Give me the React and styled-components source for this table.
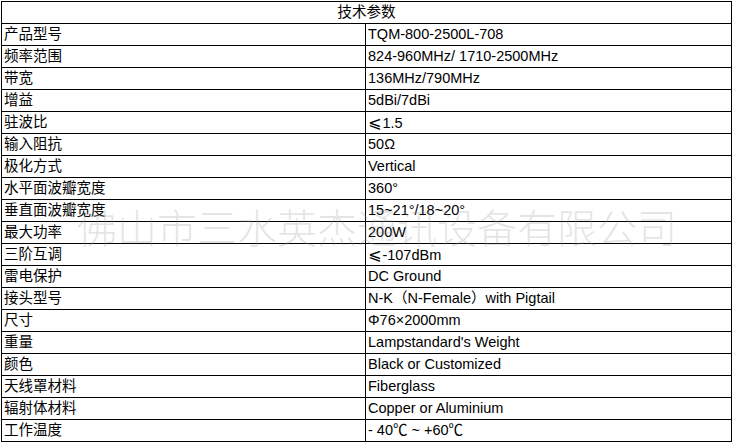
import React from "react";
import styled, { createGlobalStyle } from "styled-components";

const GlobalStyle = createGlobalStyle`
  html, body {
    margin: 0;
    padding: 0;
    background: #ffffff;
  }
  body {
    font-family: "Liberation Sans", "Noto Sans CJK SC", sans-serif;
    color: #000;
  }
`;

const Page = styled.div`
  position: relative;
  width: 732px;
  height: 442px;
  padding: 1px 0 0 1px;
  box-sizing: border-box;
  overflow: hidden;
`;

const Sheet = styled.div`
  display: grid;
  grid-template-columns: 364px 366px;
  border-top: 1px solid #000;
  border-left: 1px solid #000;
  width: max-content;
`;

const Cell = styled.div`
  box-sizing: border-box;
  height: 22px;
  line-height: 21px;
  padding-left: ${(p) => (p.$head ? 0 : 2)}px;
  border-right: 1px solid #000;
  border-bottom: 1px solid #000;
  font-size: 14.5px;
  white-space: nowrap;
  overflow: hidden;
  text-align: ${(p) => (p.$head ? "center" : "left")};
  grid-column: ${(p) => (p.$head ? "1 / span 2" : "auto")};
`;

const Sym = styled.span`
  font-family: "DejaVu Sans", sans-serif;
  font-size: 16px;
  margin-right: 1px;
`;

const Watermark = styled.div`
  position: absolute;
  left: 77px;
  top: 206px;
  font-family: "Noto Sans CJK SC", sans-serif;
  font-size: 40px;
  line-height: 40px;
  font-weight: 300;
  color: rgba(150, 150, 150, 0.25);
  white-space: nowrap;
  pointer-events: none;
`;

const rows = [
  ["产品型号", "TQM-800-2500L-708"],
  ["频率范围", "824-960MHz/ 1710-2500MHz"],
  ["带宽", "136MHz/790MHz"],
  ["增益", "5dBi/7dBi"],
  ["驻波比", <><Sym>⩽</Sym>1.5</>],
  ["输入阻抗", "50Ω"],
  ["极化方式", "Vertical"],
  ["水平面波瓣宽度", "360°"],
  ["垂直面波瓣宽度", "15~21°/18~20°"],
  ["最大功率", "200W"],
  ["三阶互调", <><Sym>⩽</Sym>-107dBm</>],
  ["雷电保护", "DC Ground"],
  ["接头型号", "N-K（N-Female）with Pigtail"],
  ["尺寸", "Φ76×2000mm"],
  ["重量", "Lampstandard's Weight"],
  ["颜色", "Black or Customized"],
  ["天线罩材料", "Fiberglass"],
  ["辐射体材料", "Copper or Aluminium"],
  ["工作温度", "- 40℃ ~ +60℃"],
];

export default function App() {
  return (
    <Page>
      <GlobalStyle />
      <Sheet>
        <Cell $head>技术参数</Cell>
        {rows.map(([name, value]) => (
          <React.Fragment key={name}>
            <Cell>{name}</Cell>
            <Cell>{value}</Cell>
          </React.Fragment>
        ))}
      </Sheet>
      <Watermark>佛山市三水英杰通讯设备有限公司</Watermark>
    </Page>
  );
}
